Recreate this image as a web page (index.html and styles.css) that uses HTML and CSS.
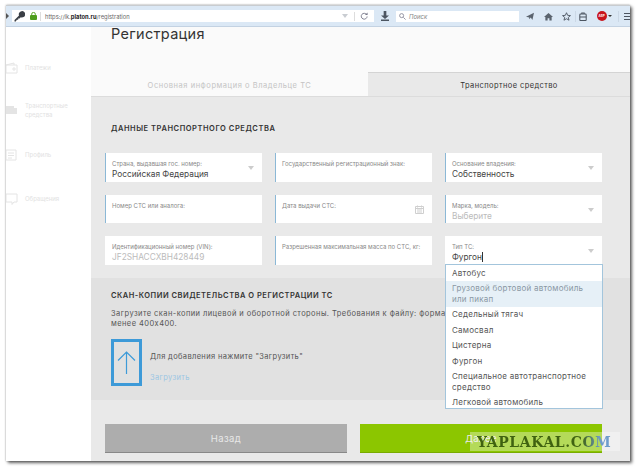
FILE: index.html
```html
<!DOCTYPE html>
<html lang="ru">
  <head>
    <meta charset="UTF-8" />
    <title>Регистрация</title>
    <link rel="stylesheet" href="styles.css">
  </head>
  <body>
    <div class="window">
      <div class="toolbar">
        <span class="back-arrow"></span>
        <div class="urlbar">
          <svg class="ico" width="11" height="11" viewBox="0 0 11 11"><path d="M.5 10.500L.5 9 5 4.500a3.200 3.200 0 1 1 1.800 1.800L5.500 7.500H4.200V8.800H2.800l-1 1.700z" fill="#3a3f46"/></svg>
          <svg class="ico lock" width="7" height="8" viewBox="0 0 7 8"><path d="M1.700 3.500V2.200a1.800 1.800 0 0 1 3.600 0v1.300" fill="none" stroke="#5aa624"/><rect y="3" width="7" height="5" rx="1" fill="#4f9e1c"/></svg>
          <span class="sep"></span>
          <span class="url">https://lk.<b>platon.ru</b>/registration</span>
          <span class="url-drop"></span>
          <span class="sep"></span>
          <svg class="ico reload" width="8" height="8" viewBox="0 0 9 9"><path d="M7.500 3a3.300 3.300 0 1 0 .5 2" fill="none" stroke="#778"/><path d="M8.500 .5v3h-3z" fill="#778"/></svg>
        </div>
        <svg class="ico download" width="8" height="10" viewBox="0 0 9 11"><path d="M3 0h3v5h3L4.500 9 0 5h3zM0 9.500h9V11H0z" fill="#4c5561"/></svg>
        <div class="searchbar">
          <svg width="7" height="7" viewBox="0 0 8 8"><circle cx="3" cy="3" r="2.300" fill="none" stroke="#889"/><path d="M5 5l2.500 2.500" stroke="#889"/></svg>
          <span>Поиск</span>
        </div>
        <div class="tools">
          <svg width="8" height="8" viewBox="0 0 10 10"><path d="M0 6l10-5-2 9-2-3-2 2V7z" fill="#5a636e"/></svg>
          <svg class="tool-home" width="9" height="9" viewBox="0 0 10 10"><path d="M5 1l5 4.500H8.500V9.500H6V7H4v2.500H1.500V5.500H0z" fill="#5a636e"/></svg>
          <svg class="tool-star" width="9" height="9" viewBox="0 0 10 10"><path d="M5 .8l1.300 2.900 3.100.3-2.400 2 .8 3.100L5 7.500 2.200 9.100 3 6 .6 4l3.100-.3z" fill="none" stroke="#4c5561"/></svg>
          <span class="tool-sep"></span>
          <svg class="tool-bag" width="8" height="9" viewBox="0 0 10 11"><rect x="1" y="2.500" width="8" height="8" rx="1" fill="none" stroke="#4c5561" stroke-width="1.300"/><path d="M3.500 2.500V1h3v1.500M1 6h8" fill="none" stroke="#4c5561" stroke-width="1.300"/></svg>
          <span class="abp">ABP</span>
          <span class="abp-caret"></span>
          <span class="tool-sep"></span>
          <span class="burger"></span>
        </div>
      </div>
      <div class="page">
        <aside class="sidebar">
          <div class="side-item side-plat">
            <svg width="12" height="12" viewBox="0 0 12 12"><path d="M0 3h11v8H0zM0 3l8-2v2M7 6h2v2H7z" fill="none" stroke="#e4e4e4"/></svg>
            <span>Платежи</span>
          </div>
          <div class="side-item side-ts">
            <svg width="12" height="12" viewBox="0 0 12 12"><path d="M0 2h8v8H0zM8 4h3v6H8z" fill="#e4e4e4"/></svg>
            <span>Транспортные<br>средства</span>
          </div>
          <div class="side-item side-prof">
            <svg width="12" height="12" viewBox="0 0 12 12"><path d="M0 1h10v10H0zM2 4h6M2 6.500h6M2 9h4" fill="none" stroke="#e4e4e4"/></svg>
            <span>Профиль</span>
          </div>
          <div class="side-item side-obr">
            <svg width="12" height="12" viewBox="0 0 12 12"><path d="M0 1h11v8H8l-2 2.500V9H0z" fill="none" stroke="#e4e4e4"/></svg>
            <span>Обращения</span>
          </div>
        </aside>
        <main class="content">
          <h1 class="page-title">Регистрация</h1>
          <div class="tabs">
            <div class="tab">Основная информация о Владельце ТС</div>
            <div class="tab tab-active">Транспортное средство</div>
          </div>
          <section class="form-panel">
            <h2 class="form-title">ДАННЫЕ ТРАНСПОРТНОГО СРЕДСТВА</h2>
            <div class="field-grid">
              <div class="field">
                <label>Страна, выдавшая гос. номер:</label>
                <div class="value">Российская Федерация</div>
                <span class="caret"></span>
              </div>
              <div class="field">
                <label>Государственный регистрационный знак:</label>
              </div>
              <div class="field">
                <label>Основание владения:</label>
                <div class="value">Собственность</div>
                <span class="caret"></span>
              </div>
              <div class="field">
                <label>Номер СТС или аналога:</label>
              </div>
              <div class="field">
                <label>Дата выдачи СТС:</label>
                <svg class="calendar" width="9" height="9" viewBox="0 0 9 9"><path d="M.5 1.500h8v7h-8zM.5 3.500h8M2.500 .5v2M6.500 .5v2M2 5h5M2 7h5" fill="none" stroke="#cfcfcf"/></svg>
              </div>
              <div class="field">
                <label>Марка, модель:</label>
                <div class="value value-muted">Выберите</div>
                <span class="caret"></span>
              </div>
              <div class="field field-plain">
                <label>Идентификационный номер (VIN):</label>
                <div class="value value-muted">JF2SHACCXBH428449</div>
              </div>
              <div class="field">
                <label>Разрешенная максимальная масса по СТС, кг:</label>
              </div>
              <div class="field field-plain">
                <label>Тип ТС:</label>
                <div class="value">Фургон<span class="text-cursor"></span></div>
                <span class="caret"></span>
              </div>
            </div>
          </section>
          <section class="scan-panel">
            <h2 class="scan-title">СКАН-КОПИИ СВИДЕТЕЛЬСТВА О РЕГИСТРАЦИИ ТС</h2>
            <p class="scan-text">Загрузите скан-копии лицевой и оборотной стороны. Требования к файлу: формат JPG, размер не<br>менее 400х400.</p>
            <div class="upload">
              <div class="upload-box">
                <svg width="19" height="23" viewBox="0 0 19 23"><path d="M9.500 1v22M1 9.500L9.500 1 18 9.500" fill="none" stroke="#3d9ad8" stroke-width="1.200"/></svg>
              </div>
              <div class="upload-info">
                <div>Для добавления нажмите "Загрузить"</div>
                <a class="upload-link">Загрузить</a>
              </div>
            </div>
          </section>
          <div class="actions">
            <button class="btn btn-back">Назад</button>
            <button class="btn btn-next">Далее</button>
          </div>
          <ul class="dropdown">
            <li>Автобус</li>
            <li class="hover">Грузовой бортовой автомобиль или пикап</li>
            <li>Седельный тягач</li>
            <li>Самосвал</li>
            <li>Цистерна</li>
            <li>Фургон</li>
            <li>Специальное автотранспортное средство</li>
            <li>Легковой автомобиль</li>
          </ul>
        </main>
      </div>
    </div>
    <div class="watermark"><span>YAPLAKAL.COM</span></div>
  </body>
</html>
```

FILE: styles.css
```css
html,
body {
  margin: 0;
  padding: 0;
  background-color: #fff;
  height: 471px;
  overflow: hidden;
  font-family: "Inter", "Noto Sans", sans-serif;
  color: #444;
}
body {
  padding: 5px 0 0 6px;
  box-sizing: border-box;
}
.window {
  width: 624px;
  height: 456px;
  display: flex;
  flex-direction: column;
  overflow: hidden;
  box-shadow: 0 0 2px rgba(0, 0, 0, 0.35), 2px 2px 3px rgba(0, 0, 0, 0.6);
  box-sizing: border-box;
}
.toolbar {
  height: 22px;
  flex: none;
  background-color: #dbe8f5;
  border-top: 1px solid #c8ccd0;
  border-bottom: 1px solid #c3d2e2;
  display: flex;
  align-items: center;
  box-sizing: border-box;
}
.back-arrow {
  flex: none;
  width: 0;
  height: 0;
  border-left: 3px solid #555;
  border-top: 3px solid transparent;
  border-bottom: 3px solid transparent;
  margin-right: 3px;
}
.urlbar {
  flex: none;
  width: 362px;
  height: 12px;
  background-color: #fff;
  display: flex;
  align-items: center;
  gap: 3px;
  padding: 0 6px 0 2px;
  box-sizing: border-box;
  font-size: 5.800px;
  color: #666;
}
.lock {
  margin-left: 2px;
}
.url {
  flex: 1;
  margin-left: 1px;
  white-space: nowrap;
}
.url b {
  color: #222;
}
.sep {
  width: 1px;
  height: 9px;
  background-color: #ddd;
}
.url-drop {
  width: 0;
  height: 0;
  border-top: 4px solid #c9cdd2;
  border-left: 3px solid transparent;
  border-right: 3px solid transparent;
  margin-right: 3px;
}
.reload {
  margin-left: 2px;
}
.download {
  flex: none;
  margin-left: 7px;
}
.searchbar {
  flex: none;
  width: 123px;
  height: 11px;
  margin-left: 7px;
  background-color: #fff;
  display: flex;
  align-items: center;
  gap: 3px;
  padding-left: 3px;
  box-sizing: border-box;
  font-size: 6px;
  font-style: italic;
  color: #888;
}
.tools {
  flex: none;
  display: flex;
  align-items: center;
  gap: 9.500px;
  padding-left: 7px;
}
.tools > * {
  flex: none;
}
.tool-sep {
  width: 1px;
  height: 11px;
  margin: 0 -6px;
  background-color: #cbd8e6;
}
.abp {
  width: 10px;
  height: 10px;
  border-radius: 50%;
  background-color: #c8141c;
  color: #fff;
  font-size: 3px;
  font-weight: 700;
  text-align: center;
  line-height: 10px;
}
.abp-caret {
  margin-left: -8px;
  margin-right: 2px;
  border-top: 2px solid #333;
  border-left: 2px solid transparent;
  border-right: 2px solid transparent;
}
.burger {
  width: 6px;
  height: 7px;
  margin-left: 1.500px;
  background: repeating-linear-gradient(#4c5561 0 1px, transparent 1px 3px);
}
.page {
  flex: 1;
  display: flex;
  min-height: 0;
}
.sidebar {
  width: 85px;
  flex: none;
  background-color: #fff;
  font-size: 6px;
  color: #e2e2e2;
  padding-top: 34px;
  box-sizing: border-box;
}
.side-item {
  display: flex;
  align-items: center;
  gap: 7px;
  line-height: 9px;
  height: 13px;
}
.side-ts {
  margin-top: 29px;
}
.side-prof {
  margin-top: 32px;
}
.side-obr {
  margin-top: 31px;
}
.content {
  flex: 1;
  position: relative;
  background-color: #fafafa;
  display: flex;
  flex-direction: column;
  min-width: 0;
}
.page-title {
  margin: 0;
  padding: 0 0 0 20px;
  height: 45px;
  box-sizing: border-box;
  font-size: 14.500px;
  line-height: 13px;
  font-weight: 400;
  letter-spacing: 0.3px;
  color: #333;
}
.tabs {
  display: flex;
  height: 25px;
  flex: none;
  border-bottom: 1px solid #dcdcdc;
  box-sizing: border-box;
  margin-bottom: -1px;
  position: relative;
}
.tab {
  flex: none;
  width: 277px;
  font-size: 7.500px;
  letter-spacing: 0.55px;
  text-align: center;
  line-height: 27px;
  color: #c4c4c4;
}
.tab-active {
  flex: 1;
  width: auto;
  padding-left: 20px;
  background-color: #e9e9e9;
  border-top: 1px solid #d4d4d4;
  border-bottom: 1px solid #e9e9e9;
  color: #333;
  letter-spacing: 0.4px;
  line-height: 26px;
  box-sizing: border-box;
}
.form-panel {
  height: 182px;
  flex: none;
  background-color: #e9e9e9;
  padding: 27px 28px 0 14px;
  box-sizing: border-box;
}
.form-title {
  margin: 0 0 0 6px;
  font-size: 7.500px;
  line-height: 12px;
  font-weight: 600;
  letter-spacing: 0.55px;
  color: #333;
}
.field-grid {
  margin-top: 18px;
  display: grid;
  grid-template-columns: 157px 157px 157px;
  grid-auto-rows: 28.500px;
  column-gap: 13px;
  row-gap: 13px;
}
.field {
  position: relative;
  background-color: #fff;
  border-left: 1px solid #8bb8d6;
  padding: 7px 0 0 6px;
  box-sizing: border-box;
}
.field-plain {
  border-left-color: #fff;
}
.field label {
  display: block;
  font-size: 6px;
  line-height: 8px;
  color: #888;
  white-space: nowrap;
}
.value {
  font-size: 8.300px;
  line-height: 12px;
  color: #444;
  white-space: nowrap;
}
.value-muted {
  color: #bbb;
}
.text-cursor {
  display: inline-block;
  width: 1px;
  height: 10px;
  vertical-align: -2px;
  background-color: #333;
}
.caret {
  position: absolute;
  right: 8px;
  top: 13px;
  border-top: 4px solid #ccc;
  border-left: 3px solid transparent;
  border-right: 3px solid transparent;
}
.calendar {
  position: absolute;
  right: 8px;
  top: 10px;
}
.scan-panel {
  height: 122px;
  flex: none;
  background-color: #e1e1e1;
  padding: 13px 0 0 20px;
  box-sizing: border-box;
  overflow: hidden;
}
.scan-title {
  margin: 0;
  font-size: 7.500px;
  line-height: 10px;
  font-weight: 600;
  letter-spacing: 0.5px;
  color: #333;
}
.scan-text {
  margin: 8px 0 0 0;
  width: 334px;
  overflow: hidden;
  white-space: nowrap;
  font-size: 7.500px;
  line-height: 10px;
  letter-spacing: 0.43px;
  color: #555;
}
.upload {
  margin-top: 10px;
  display: flex;
  gap: 8px;
}
.upload-box {
  width: 31px;
  height: 47px;
  border: 3px solid #3d9ad8;
  box-sizing: border-box;
  display: flex;
  align-items: center;
  justify-content: center;
}
.upload-info {
  font-size: 7.500px;
  line-height: 10px;
  letter-spacing: 0.35px;
  padding-top: 13px;
  color: #555;
}
.upload-link {
  display: block;
  margin-top: 11px;
  color: #9cc6e3;
}
.actions {
  flex: 1;
  background-color: #e9e9e9;
  display: flex;
  gap: 13px;
  padding: 24px 28px 0 14px;
  box-sizing: border-box;
}
.btn {
  flex: 1;
  height: 29px;
  border: 0;
  border-bottom: 1px solid #888;
  font-family: inherit;
  font-size: 9.500px;
  letter-spacing: 0.4px;
  color: #e8e8e8;
  background-color: #adadad;
}
.btn-next {
  background-color: #8cc600;
  border-bottom-color: #79ab00;
}
.dropdown {
  position: absolute;
  left: 354px;
  top: 237px;
  width: 158px;
  height: 145px;
  margin: 0;
  padding: 0;
  list-style-type: none;
  background-color: #fff;
  border: 1px solid #a3c5dc;
  box-sizing: border-box;
  font-size: 8px;
  line-height: 10.500px;
  letter-spacing: 0.25px;
  color: #555;
}
.dropdown li {
  padding: 2.500px 6px;
}
.dropdown li.hover {
  background-color: #e6f0f7;
  color: #8a98a4;
}
.watermark {
  position: absolute;
  left: 470px;
  top: 432px;
  width: 150px;
  height: 19px;
  box-sizing: border-box;
  padding-left: 7px;
  background-color: rgba(255, 255, 255, 0.35);
  font-family: "DejaVu Serif", serif;
  font-weight: 700;
  font-size: 14px;
  line-height: 21px;
  letter-spacing: 0.6px;
  white-space: nowrap;
}
.watermark span {
  background: linear-gradient(90deg, #3f6210 0, #3f6210 78%, #6f9ccc 92%);
  -webkit-background-clip: text;
  background-clip: text;
  color: transparent;
}
```
